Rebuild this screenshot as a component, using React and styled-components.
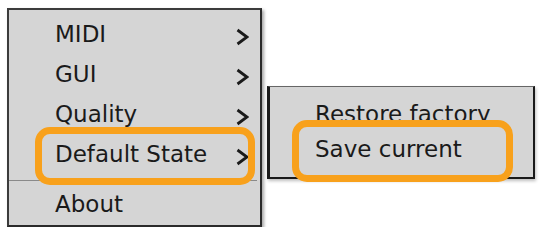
import React from 'react';
import styled, { createGlobalStyle } from 'styled-components';

const GlobalStyle = createGlobalStyle`
  html, body {
    margin: 0;
    padding: 0;
    background: #ffffff;
  }
  * {
    box-sizing: border-box;
  }
`;

const Screen = styled.div`
  display: flex;
  align-items: flex-start;
  gap: 5px;
  padding: 8px 0 0 7px;
  font-family: 'DejaVu Sans', 'Liberation Sans', sans-serif;
  font-size: 23px;
  color: #1a1a1a;
`;

const Menu = styled.div`
  width: 255px;
  background: #d5d5d5;
  border: 2px solid #3c3c3c;
  border-right-color: #2a2a2a;
  border-bottom-color: #2a2a2a;
  padding: 4px 0 1px;
  box-shadow: 2px 2px 3px rgba(0, 0, 0, 0.35);
`;

const SubMenu = styled.div`
  width: 268px;
  margin-top: 78px;
  background: #d5d5d5;
  border-style: solid;
  border-color: #1a1a1a;
  border-width: 1px 2px 2px 3px;
  border-top-color: #666;
  padding: 10px 0;
  box-shadow: 1px 2px 3px rgba(0, 0, 0, 0.25);
`;

const Item = styled.div`
  position: relative;
  display: flex;
  align-items: center;
  justify-content: space-between;
  height: ${(p) => (p.$sub ? 35 : 40)}px;
  line-height: ${(p) => (p.$sub ? 35 : 40)}px;
  padding: 0 11px 0 ${(p) => (p.$sub ? 45 : 46)}px;
  white-space: nowrap;

  ${(p) =>
    p.$marked &&
    `
    &::after {
      content: '';
      position: absolute;
      left: ${p.$sub ? 22 : 26}px;
      right: ${p.$sub ? 20 : 5}px;
      top: ${p.$sub ? -12 : -7}px;
      bottom: ${p.$sub ? -15 : -11}px;
      border: 7px solid #f8a11c;
      border-radius: 15px;
      pointer-events: none;
    }
  `}
`;

const Separator = styled.div`
  height: 1px;
  background: #8a8a8a;
  margin: 6px 3px 3px 0;
`;

const Arrow = styled.svg`
  display: block;
  width: 14px;
  height: 18px;
  min-width: 14px;
  margin-top: 5px;
  flex: none;
`;

function Chevron() {
  return (
    <Arrow viewBox="0 0 14 18">
      <path d="M2.5 2 L12 9 L2.5 16" fill="none" stroke="#1a1a1a" strokeWidth="2.8" />
    </Arrow>
  );
}

const mainItems = [
  { label: 'MIDI', sub: true },
  { label: 'GUI', sub: true },
  { label: 'Quality', sub: true },
  { label: 'Default State', sub: true, marked: true },
];

export default function App() {
  return (
    <>
      <GlobalStyle />
      <Screen>
        <Menu>
          {mainItems.map((it) => (
            <Item key={it.label} $marked={it.marked}>
              <span>{it.label}</span>
              {it.sub && <Chevron />}
            </Item>
          ))}
          <Separator />
          <Item>
            <span>About</span>
          </Item>
        </Menu>
        <SubMenu>
          <Item $sub>
            <span>Restore factory</span>
          </Item>
          <Item $sub $marked>
            <span>Save current</span>
          </Item>
        </SubMenu>
      </Screen>
    </>
  );
}
